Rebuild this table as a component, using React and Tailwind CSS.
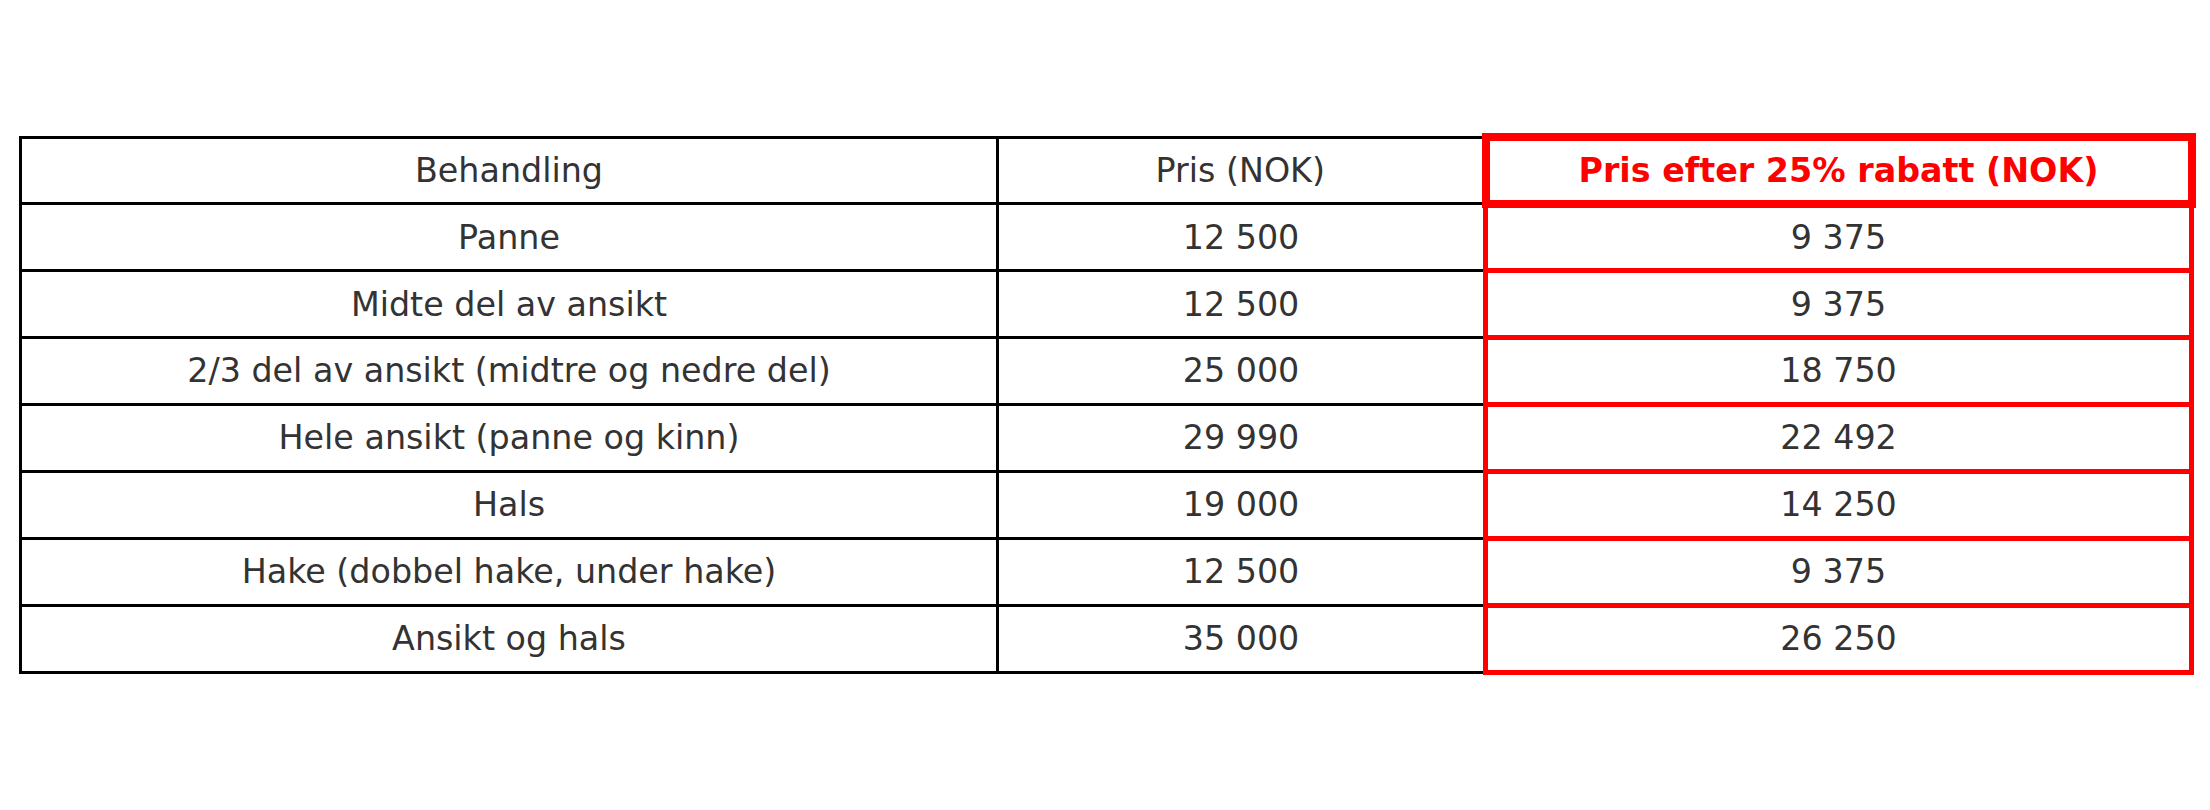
import React from 'react';

const rows = [
  ['Panne', '12 500', '9 375'],
  ['Midte del av ansikt', '12 500', '9 375'],
  ['2/3 del av ansikt (midtre og nedre del)', '25 000', '18 750'],
  ['Hele ansikt (panne og kinn)', '29 990', '22 492'],
  ['Hals', '19 000', '14 250'],
  ['Hake (dobbel hake, under hake)', '12 500', '9 375'],
  ['Ansikt og hals', '35 000', '26 250'],
];

const cell = 'h-[66.875px] p-0 text-center align-middle border-[3px] border-black';
const redCell = 'h-[66.875px] p-0 text-center align-middle border-[5px] border-[#ff0000]';

export default function App() {
  return (
    <div className="w-[2210px] h-[810px] bg-white pt-[133px] pl-[19px] text-[33.33px] text-[#333333] font-['DejaVu_Sans',sans-serif] leading-none">
      <table className="border-collapse table-fixed w-[2175px]">
        <colgroup>
          <col className="w-[977px]" />
          <col className="w-[488px]" />
          <col className="w-[706px]" />
        </colgroup>
        <thead>
          <tr>
            <th className={cell + ' font-normal'}>Behandling</th>
            <th className={cell + ' font-normal'}>Pris (NOK)</th>
            <th className="h-[66.875px] p-0 text-center align-middle border-[8px] border-[#ff0000] font-bold text-[#ff0000]">
              Pris efter 25% rabatt (NOK)
            </th>
          </tr>
        </thead>
        <tbody>
          {rows.map((r) => (
            <tr key={r[0]}>
              <td className={cell}>{r[0]}</td>
              <td className={cell}>{r[1]}</td>
              <td className={redCell}>{r[2]}</td>
            </tr>
          ))}
        </tbody>
      </table>
    </div>
  );
}
